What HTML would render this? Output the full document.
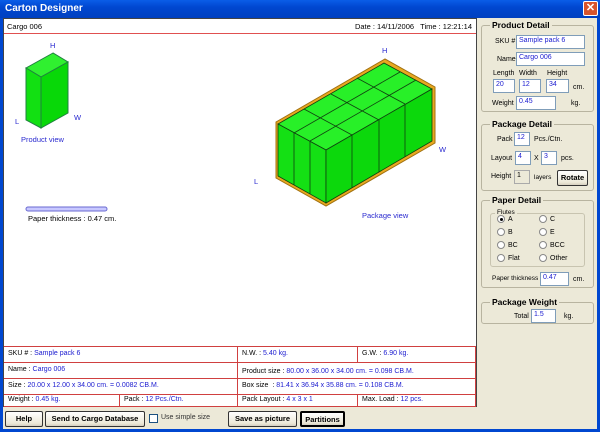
<!DOCTYPE html>
<html><head><style>
*{margin:0;padding:0;box-sizing:border-box}
body{width:600px;height:432px;overflow:hidden;background:#ece9d8;font-family:"Liberation Sans",sans-serif;font-size:7.5px;color:#000;position:relative}
.a{position:absolute}
.b{color:#1a1ad0}
.title{left:0;top:0;width:600px;height:18px;background:linear-gradient(#0a5de8,#0047d0 40%,#0040c0);color:#fff;font-weight:bold;font-size:10px;padding:3px 0 0 5px}
.close{right:2px;top:1px;width:15px;height:15px;background:#d8542c;border:1px solid #fff;border-radius:2px;color:#fff;font-size:11px;line-height:12px;text-align:center;font-weight:bold}
.frame{left:0;top:18px;width:600px;height:414px;border-left:3px solid #0047d0;border-right:3px solid #0047d0;border-bottom:3px solid #0047d0}
.main{left:3px;top:18px;width:474px;height:389px;background:#fff;border:1px solid #444}
.cell{position:absolute;border-right:1px solid #d04040;border-bottom:1px solid #d04040;padding:3px 0 0 4px;height:16px;font-size:7px}
.grp{position:absolute;border:1px solid #b8b4a0;border-radius:3px}
.grp .t{position:absolute;top:-6px;left:8px;background:#ece9d8;font-weight:bold;font-size:8.5px;padding:0 2px}
.rp{font-size:7px}
.in{position:absolute;background:#fff;border:1px solid #7f9db9;color:#1a1ad0;padding:1px 0 0 2px;height:14px;font-size:7px}
.btn{position:absolute;top:411px;height:16px;border:1px solid #333;border-radius:2px;background:linear-gradient(#fff,#ece9d8 80%,#d6d0c0);font-weight:bold;text-align:center;line-height:14px;font-size:7.5px}
.r{position:absolute;width:8px;height:8px;border:1px solid #888;border-radius:50%;background:#fff}
</style></head><body>
<div class="a title">Carton Designer</div>
<div class="a close">✕</div>
<div class="a frame"></div>
<div class="a main">
  <div class="a" style="left:3px;top:3px">Cargo 006</div>
  <div class="a" style="right:4px;top:3px">Date : 14/11/2006 &nbsp; Time : 12:21:14</div>
  <div class="a" style="left:0;top:14px;width:472px;border-top:1px solid #e05050"></div>
</div>
<svg class="a" style="left:0;top:0" width="480" height="345">
  <g stroke="#208040" stroke-width="1" fill="#18e818">
    <polygon points="53,53 26,68 41,77 68,62" fill="#30f030"/>
    <polygon points="26,68 41,77 41,128 26,120" fill="#12e012"/>
    <polygon points="41,77 68,62 68,113 41,128" fill="#08d808"/>
  </g>
  <g font-size="7.5" fill="#2a2ad0" font-family="Liberation Sans">
    <text x="50" y="48">H</text><text x="15" y="124">L</text><text x="74" y="120">W</text>
    <text x="21" y="142">Product view</text>
    <text x="382" y="53">H</text><text x="439" y="152">W</text><text x="254" y="184">L</text>
    <text x="362" y="218">Package view</text>
  </g>
  <rect x="26" y="207" width="81" height="4" rx="2" fill="#c8c8ff" stroke="#6a6ad0"/>
  <text x="28" y="221" font-size="7.5" font-family="Liberation Sans">Paper thickness : 0.47 cm.</text>
  <polygon points="276,122 385,59 435,87 435,143 326,206 276,178" fill="#e8a820" stroke="#a07010"/>
  <g stroke="#104010" stroke-width="0.8">
    <polygon points="278,124 384,63 432,89 326,150" fill="#28f028"/>
    <polygon points="278,124 326,150 326,203 278,176" fill="#14e014"/>
    <polygon points="326,150 432,89 432,141 326,203" fill="#0cd80c"/>
    <line x1="294" y1="133" x2="400" y2="72"/>
    <line x1="310" y1="141" x2="416" y2="80"/>
    <line x1="304" y1="109" x2="352" y2="135"/>
    <line x1="331" y1="94" x2="379" y2="120"/>
    <line x1="357" y1="78" x2="405" y2="104"/>
    <line x1="294" y1="133" x2="294" y2="185"/>
    <line x1="310" y1="141" x2="310" y2="194"/>
    <line x1="352" y1="135" x2="352" y2="188"/>
    <line x1="379" y1="120" x2="379" y2="172"/>
    <line x1="405" y1="104" x2="405" y2="157"/>
  </g>
</svg>
<div class="a" style="left:4px;top:346px;width:472px;border-top:1px solid #d04040"></div>
<div class="cell" style="left:4px;top:347px;width:234px">SKU # : <span class="b">Sample pack 6</span></div>
<div class="cell" style="left:238px;top:347px;width:120px">N.W. : <span class="b">5.40 kg.</span></div>
<div class="cell" style="left:358px;top:347px;width:118px">G.W. : <span class="b">6.90 kg.</span></div>
<div class="cell" style="left:4px;top:363px;width:234px">Name : <span class="b">Cargo 006</span></div>
<div class="cell" style="left:238px;top:363px;width:238px;padding-top:5px">Product size : <span class="b">80.00 x 36.00 x 34.00 cm. = 0.098 CB.M.</span></div>
<div class="cell" style="left:4px;top:379px;width:234px">Size : <span class="b">20.00 x 12.00 x 34.00 cm. = 0.0082 CB.M.</span></div>
<div class="cell" style="left:238px;top:379px;width:238px">Box size &nbsp;: <span class="b">81.41 x 36.94 x 35.88 cm. = 0.108 CB.M.</span></div>
<div class="cell" style="left:4px;top:395px;width:116px;height:12px;padding-top:1px">Weight : <span class="b">0.45 kg.</span></div>
<div class="cell" style="left:120px;top:395px;width:118px;height:12px;padding-top:1px">Pack : <span class="b">12 Pcs./Ctn.</span></div>
<div class="cell" style="left:238px;top:395px;width:120px;height:12px;padding-top:1px">Pack Layout : <span class="b">4 x 3 x 1</span></div>
<div class="cell" style="left:358px;top:395px;width:118px;height:12px;padding-top:1px">Max. Load : <span class="b">12 pcs.</span></div>
<div class="btn" style="left:5px;width:38px">Help</div>
<div class="btn" style="left:45px;width:100px">Send to Cargo Database</div>
<div class="a" style="left:149px;top:414px;width:9px;height:9px;border:1px solid #1c5180;background:#fff"></div>
<div class="a" style="left:161px;top:414px;color:#333;font-size:7px">Use simple size</div>
<div class="btn" style="left:228px;width:69px">Save as picture</div>
<div class="btn" style="left:300px;width:45px;border:2px solid #000">Partitions</div>
<div class="rp">
<div class="grp" style="left:481px;top:25px;width:113px;height:87px"><span class="t">Product Detail</span></div>
<div class="a" style="left:495px;top:38px">SKU #</div><div class="in" style="left:516px;top:35px;width:69px">Sample pack 6</div>
<div class="a" style="left:497px;top:56px">Name</div><div class="in" style="left:516px;top:52px;width:69px">Cargo 006</div>
<div class="a" style="left:493px;top:70px">Length</div><div class="a" style="left:519px;top:70px">Width</div><div class="a" style="left:547px;top:70px">Height</div>
<div class="in" style="left:493px;top:79px;width:22px">20</div><div class="in" style="left:519px;top:79px;width:22px">12</div><div class="in" style="left:546px;top:79px;width:23px">34</div>
<div class="a" style="left:573px;top:84px">cm.</div>
<div class="a" style="left:492px;top:100px">Weight</div><div class="in" style="left:516px;top:96px;width:40px">0.45</div><div class="a" style="left:571px;top:100px">kg.</div>
<div class="grp" style="left:481px;top:124px;width:113px;height:67px"><span class="t">Package Detail</span></div>
<div class="a" style="left:497px;top:136px">Pack</div><div class="in" style="left:514px;top:132px;width:16px">12</div><div class="a" style="left:534px;top:136px">Pcs./Ctn.</div>
<div class="a" style="left:491px;top:155px">Layout</div><div class="in" style="left:515px;top:151px;width:16px">4</div><div class="a" style="left:534px;top:155px">X</div><div class="in" style="left:541px;top:151px;width:16px">3</div><div class="a" style="left:561px;top:155px">pcs.</div>
<div class="a" style="left:491px;top:173px">Height</div><div class="in" style="left:514px;top:170px;width:16px;background:#ece9d8;border-color:#aaa;color:#000">1</div><div class="a" style="left:534px;top:174px;font-size:6.5px">layers</div>
<div class="btn" style="left:557px;top:170px;width:31px">Rotate</div>
<div class="grp" style="left:481px;top:200px;width:113px;height:88px"><span class="t">Paper Detail</span></div>
<div class="grp" style="left:490px;top:213px;width:95px;height:54px;border-color:#c8c4b0"><span class="t" style="font-weight:normal;font-size:6.5px;left:4px;top:-5px">Flutes</span></div>
<div class="r" style="left:497px;top:215px"></div><div class="a" style="left:508px;top:216px">A</div>
<div class="r" style="left:539px;top:215px"></div><div class="a" style="left:550px;top:216px">C</div>
<div class="r" style="left:497px;top:228px"></div><div class="a" style="left:508px;top:229px">B</div>
<div class="r" style="left:539px;top:228px"></div><div class="a" style="left:550px;top:229px">E</div>
<div class="r" style="left:497px;top:241px"></div><div class="a" style="left:508px;top:242px">BC</div>
<div class="r" style="left:539px;top:241px"></div><div class="a" style="left:550px;top:242px">BCC</div>
<div class="r" style="left:497px;top:254px"></div><div class="a" style="left:508px;top:255px">Flat</div>
<div class="r" style="left:539px;top:254px"></div><div class="a" style="left:550px;top:255px">Other</div>
<div class="a" style="left:500px;top:218px;width:3px;height:3px;border-radius:50%;background:#000"></div>
<div class="a" style="left:492px;top:275px;font-size:6.5px">Paper thickness</div><div class="in" style="left:540px;top:272px;width:29px">0.47</div><div class="a" style="left:573px;top:276px">cm.</div>
<div class="grp" style="left:481px;top:302px;width:113px;height:22px"><span class="t">Package Weight</span></div>
<div class="a" style="left:514px;top:313px">Total</div><div class="in" style="left:531px;top:309px;width:25px">1.5</div><div class="a" style="left:564px;top:313px">kg.</div>
</div>
</body></html>
